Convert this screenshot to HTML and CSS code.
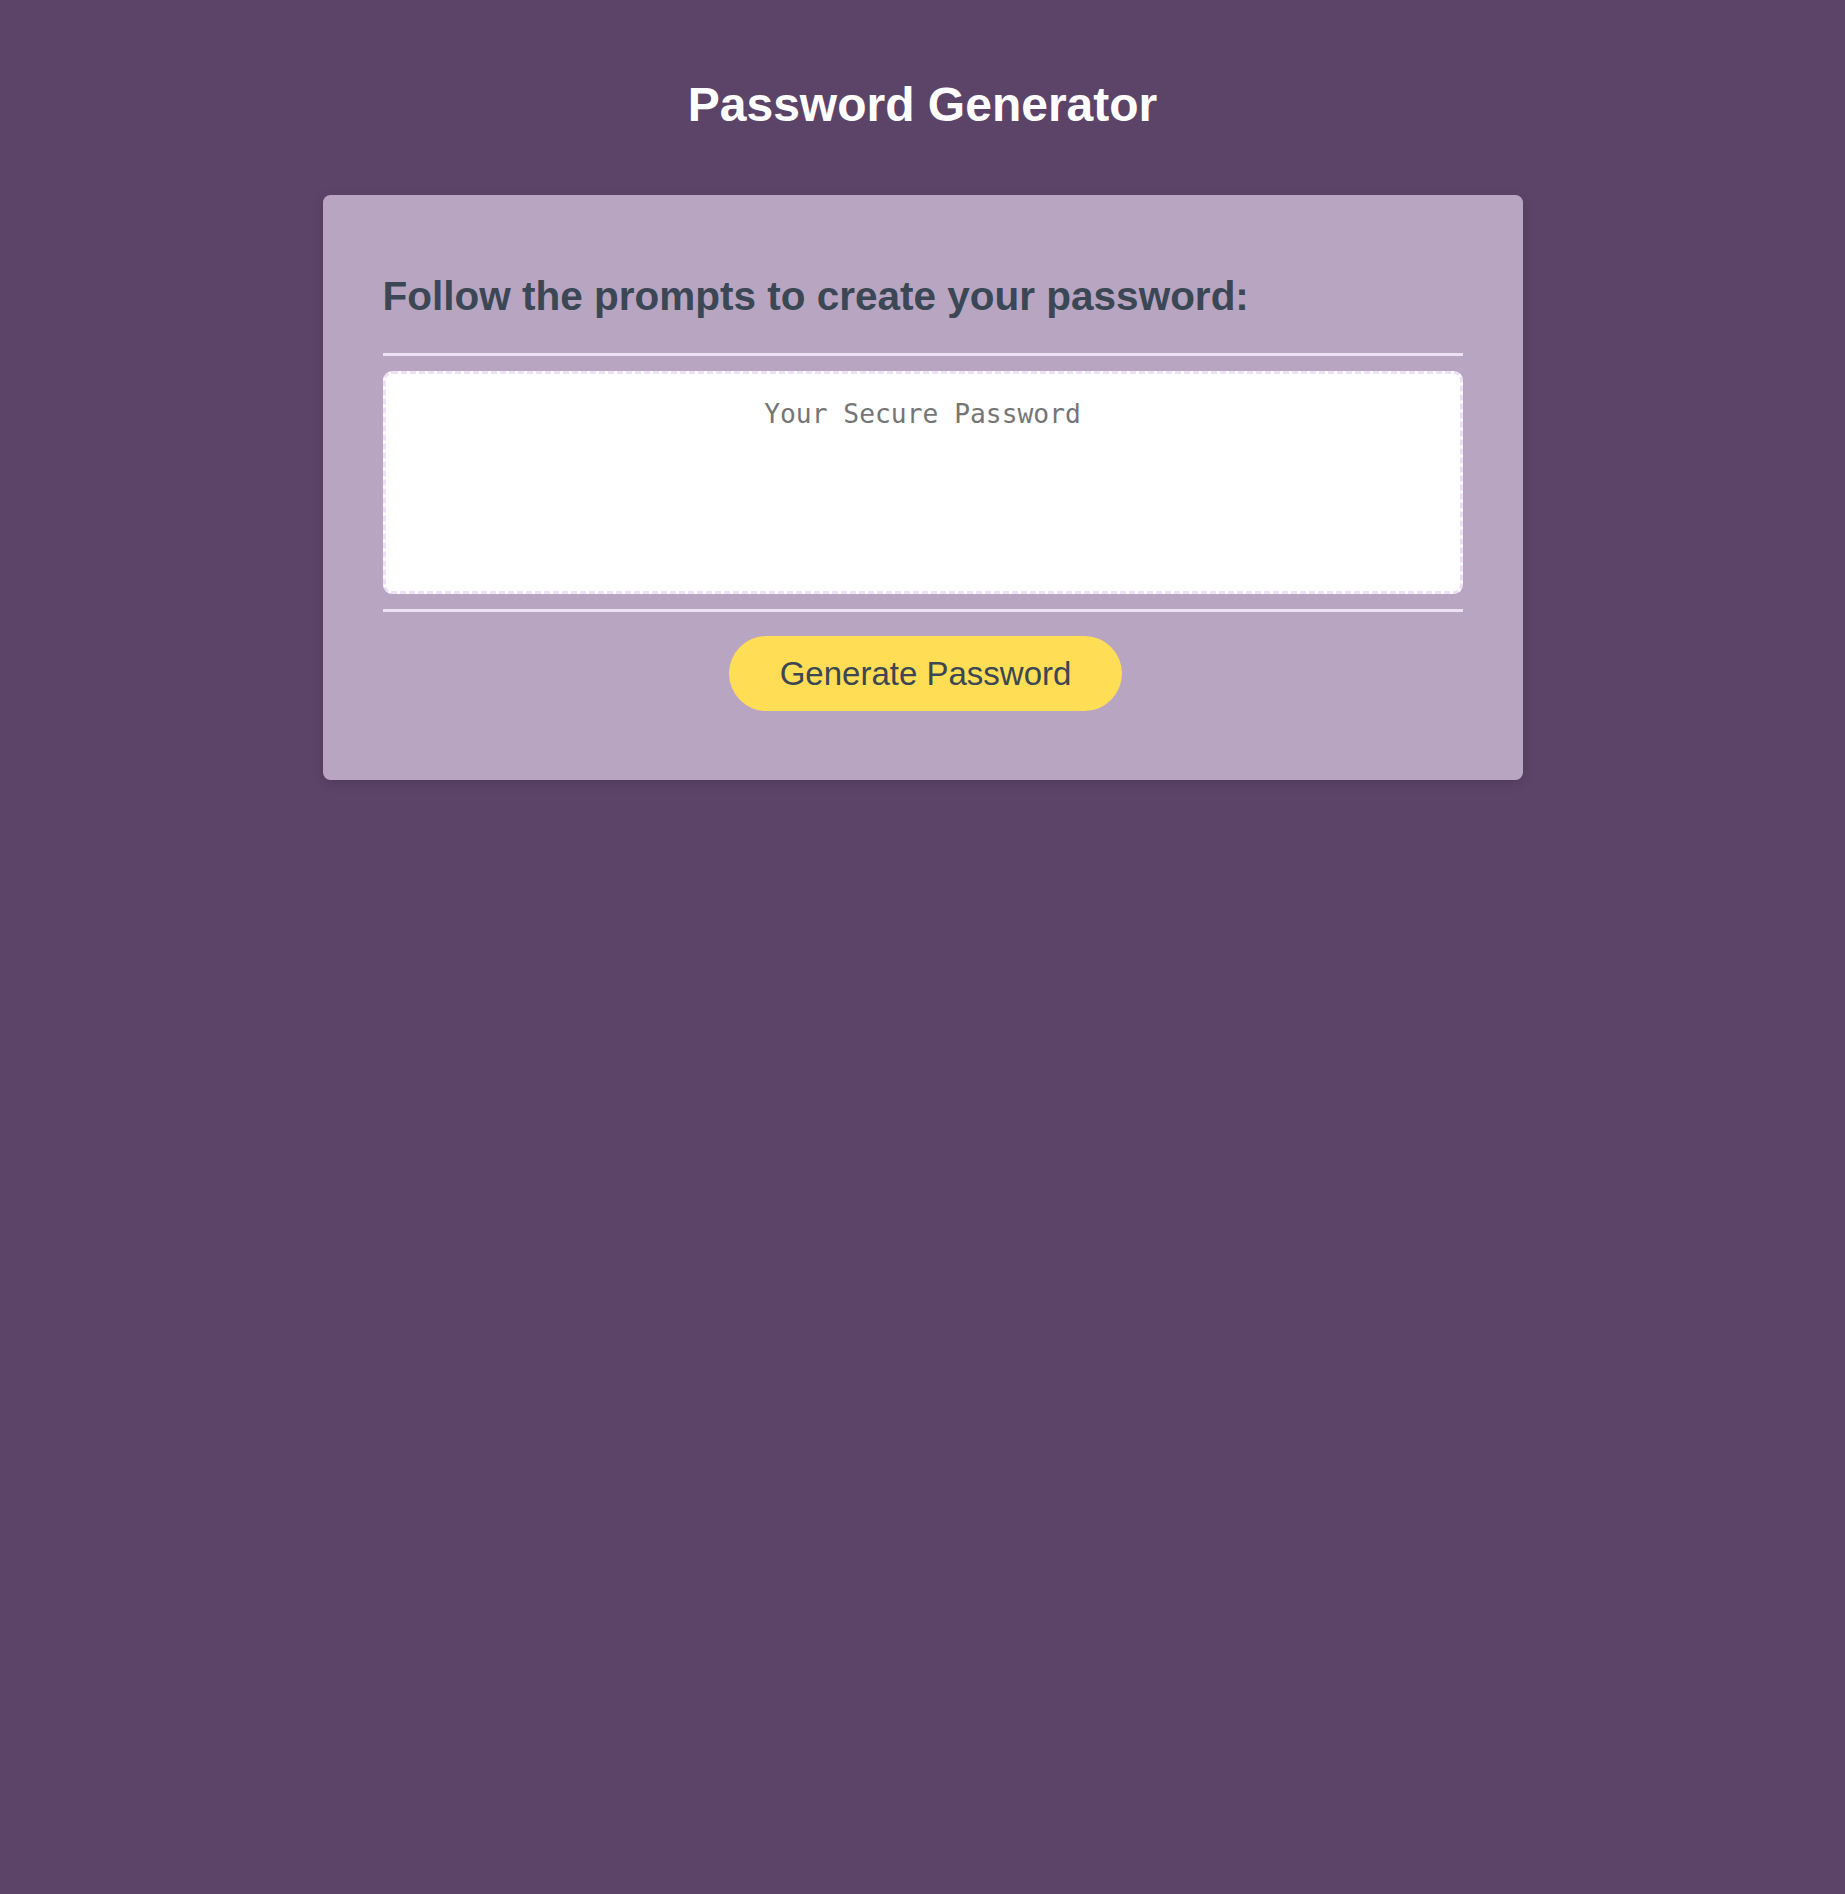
FILE: index.html
```html
<!DOCTYPE html>
<html lang="en">
<head>
<meta charset="UTF-8">
<title>Password Generator</title>
<link rel="stylesheet" href="styles.css">
</head>
<body>
<div class="wrapper">
  <header class="page-header">
    <h1 class="title">Password Generator</h1>
  </header>
  <div class="card">
    <div class="card-header">
      <h2 class="card-title">Follow the prompts to create your password:</h2>
    </div>
    <div class="card-body">
      <textarea readonly class="password" placeholder="Your Secure Password" aria-label="Generated Password"></textarea>
    </div>
    <div class="card-footer">
      <button class="btn">Generate Password</button>
    </div>
  </div>
</div>
</body>
</html>
```

FILE: styles.css
```css
*, *::before, *::after {
  box-sizing: border-box;
}

html, body {
  margin: 0;
  padding: 0;
  height: 100%;
}

body {
  font-family: "Liberation Sans", Arial, sans-serif;
  background-color: #5c4469;
}

.wrapper {
  padding: 45px 30px 0;
  min-height: 100%;
}

.page-header {
  text-align: center;
  padding: 0 30px 30px;
  color: #ffffff;
}

.title {
  font-size: 48px;
  font-weight: bold;
  margin: 32.16px 0;
  line-height: 55.2px;
}

.card {
  background-color: #b8a5c2;
  border-radius: 7.5px;
  box-shadow: rgba(0, 0, 0, 0.15) 0 3px 12px 0;
  color: #3b4754;
  font-size: 27px;
  margin: 0 auto;
  max-width: 1200px;
  padding: 45px 60px;
}

.card-title {
  font-size: 40.5px;
  font-weight: bold;
  margin: 33.6px 0;
  line-height: 46.5px;
}

.card-header::after {
  content: " ";
  display: block;
  width: 100%;
  height: 3px;
  background: #efe1f5;
}

.card-body {
  min-height: 150px;
}

.password {
  appearance: none;
  -webkit-appearance: none;
  display: block;
  width: 100%;
  height: 223px;
  margin: 15px 0;
  padding: 25px 22.5px 0;
  font-family: "DejaVu Sans Mono", monospace;
  font-size: 26.3px;
  text-align: center;
  color: #3b4754;
  background: #ffffff;
  border: 3px dashed #efe1f5;
  border-radius: 9px;
  resize: none;
  overflow: hidden;
  outline: none;
}

.password::placeholder {
  color: #757575;
}

.card-footer {
  text-align: center;
}

.card-footer::before {
  content: " ";
  display: block;
  width: 100%;
  height: 3px;
  background: #efe1f5;
}

.btn {
  border: none;
  background-color: #ffdd55;
  border-radius: 37.5px;
  color: #3b4754;
  display: inline-block;
  font-family: "Liberation Sans", Arial, sans-serif;
  font-size: 33px;
  line-height: 33px;
  margin: 24px 24px 24px 30px;
  padding: 21px 51px;
  text-align: center;
  cursor: pointer;
}
```
